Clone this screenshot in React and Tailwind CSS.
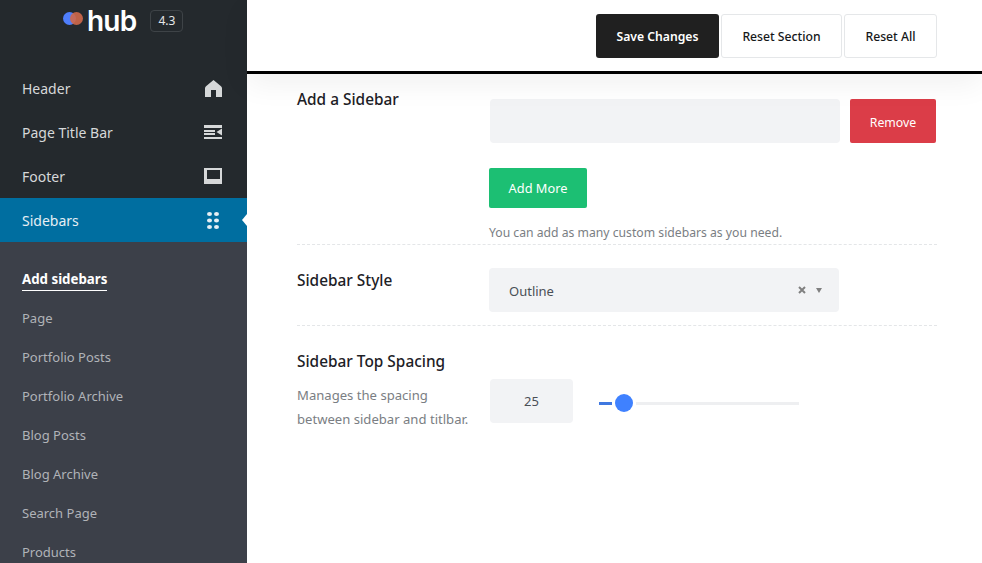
const font = { fontFamily: '"Noto Sans", sans-serif' };

const subItems = ["Page", "Portfolio Posts", "Portfolio Archive", "Blog Posts", "Blog Archive", "Search Page", "Products"];

function HomeIcon() {
  return (
    <svg width="17" height="17" viewBox="0 0 17 17" fill="currentColor">
      <path d="M8.5 0 16 6.2q1 .8 1 2V17h-6v-7H6v7H0V8.2q0-1.2 1-2z" />
    </svg>
  );
}

function TitleBarIcon() {
  return (
    <svg width="18" height="14" viewBox="0 0 18 14" fill="currentColor">
      <rect x="0" y="0" width="18" height="3" />
      <rect x="0" y="5" width="11" height="2" />
      <rect x="0" y="8" width="11" height="2" />
      <rect x="0" y="12" width="18" height="2" />
      <path d="M18 3.5v7L12.5 7z" />
    </svg>
  );
}

function FooterIcon() {
  return (
    <svg width="18" height="16" viewBox="0 0 18 16" fill="none">
      <path fillRule="evenodd" clipRule="evenodd" d="M0 0h18v16H0zM3 2v9h13V2z" fill="currentColor" />
    </svg>
  );
}

function DotsIcon() {
  return (
    <svg width="12" height="17" viewBox="0 0 12 17" fill="currentColor">
      <ellipse cx="2.5" cy="2" rx="2.5" ry="2" />
      <ellipse cx="9.5" cy="2" rx="2.5" ry="2" />
      <ellipse cx="2.5" cy="8.5" rx="2.5" ry="2" />
      <ellipse cx="9.5" cy="8.5" rx="2.5" ry="2" />
      <ellipse cx="2.5" cy="15" rx="2.5" ry="2" />
      <ellipse cx="9.5" cy="15" rx="2.5" ry="2" />
    </svg>
  );
}

function NavItem({ label, icon, active }) {
  return (
    <div className={`relative flex h-11 shrink-0 items-center justify-between pl-[22px] pr-[25px] text-[14px] ${active ? "bg-[#006ea0] text-[#e6eff4]" : "text-[#d6d8d9]"}`}>
      <span>{label}</span>
      <span className="flex w-[18px] justify-center">{icon}</span>
      {active ? <span className="absolute right-0 top-[16px] h-0 w-0 border-y-[6px] border-r-[5px] border-y-transparent border-r-white" /> : null}
    </div>
  );
}

function Sidebar() {
  return (
    <aside className="flex h-full w-[247px] shrink-0 flex-col bg-[#3c4049]">
      <div className="shrink-0 bg-[#24292d]">
        <div className="flex h-[66px] items-start pl-[63px]">
          <svg width="20" height="13" viewBox="0 0 20 13" className="mt-[12px]">
            <circle cx="6.5" cy="6.5" r="6.5" fill="#4f7efb" />
            <circle cx="13.5" cy="6.5" r="6.5" fill="#d0684a" fillOpacity="0.9" />
          </svg>
          <span className="ml-[4px] mt-[3px] text-[28px] font-semibold leading-9 tracking-[-0.8px] text-white" style={{ fontFamily: "Inter, sans-serif" }}>hub</span>
          <span className="ml-[14px] mt-[10px] flex h-[22px] w-[33px] items-center justify-center rounded-sm border border-[#3e4347] text-xs text-[#e5e7e8]">4.3</span>
        </div>
        <NavItem label="Header" icon={<HomeIcon />} />
        <NavItem label="Page Title Bar" icon={<TitleBarIcon />} />
        <NavItem label="Footer" icon={<FooterIcon />} />
      </div>
      <NavItem label="Sidebars" icon={<DotsIcon />} active />
      <div className="pl-[22px] pt-[22px] text-[13px] text-[#b0b3b8]">
        <div className="mb-[4px] flex h-[31px] items-center">
          <span className="border-b border-white pb-[1px] text-[13.3px] font-bold leading-[20px] text-white">Add sidebars</span>
        </div>
        {subItems.map((item) => (
          <div key={item} className="flex h-[39px] items-center">{item}</div>
        ))}
      </div>
    </aside>
  );
}

function TopBar() {
  return (
    <div className="relative z-10 flex h-[74px] shrink-0 items-start justify-end gap-[2px] border-b-[3px] border-black bg-white pr-[45px] pt-[14px] text-[12.2px] font-medium shadow-[0_10px_30px_rgba(0,0,0,0.06)]">
      <button className="h-11 w-[123px] rounded-[3px] bg-[#202020] pt-[2px] font-semibold text-white">Save Changes</button>
      <button className="h-11 w-[121px] rounded-[3px] border border-[#e5e7e9] bg-white pt-[2px] text-[#16181a]">Reset Section</button>
      <button className="h-11 w-[93px] rounded-[3px] border border-[#e5e7e9] bg-white pt-[2px] text-[#16181a]">Reset All</button>
    </div>
  );
}

function Slider() {
  return (
    <div className="ml-[26px] mt-[4px] flex w-[200px] items-center">
      <span className="h-[3px] w-[13px] bg-[#3f78e0]" />
      <span className="ml-[3px] h-[18px] w-[18px] rounded-full bg-[#3f81ff]" />
      <span className="ml-[3px] h-[3px] flex-1 bg-[#eeeff1]" />
    </div>
  );
}

function Content() {
  return (
    <div className="pl-[50px] pr-[45px] text-[13px] text-[#4a4f55]">
      <section className="flex h-[171px] border-b border-dashed border-[#e4e6e8] pt-[16px]">
        <h3 className="w-[192px] shrink-0 text-[15.4px] font-medium leading-[20px] text-[#1d2126]">Add a Sidebar</h3>
        <div className="pt-[9px]">
          <div className="flex gap-[10px] pl-px">
            <div className="h-11 w-[350px] rounded-[4px] bg-[#f2f3f5]" />
            <button className="h-11 w-[86px] rounded-[2px] bg-[#db3d48] pt-[4px] text-[12.3px] text-white">Remove</button>
          </div>
          <button className="mt-[25px] h-10 w-[98px] rounded-[2px] bg-[#1cbf73] pt-[2px] text-[12.8px] text-white">Add More</button>
          <p className="mt-[16px] text-[12.2px] leading-[18px] text-[#7a7e83]">You can add as many custom sidebars as you need.</p>
        </div>
      </section>
      <section className="flex h-[81px] items-start border-b border-dashed border-[#e4e6e8] pt-[23px]">
        <h3 className="w-[192px] shrink-0 pt-px text-[15.4px] font-medium leading-[24px] text-[#1d2126]">Sidebar Style</h3>
        <div className="flex h-11 w-[350px] items-center rounded-[4px] bg-[#f2f3f5] pl-5 pr-[17px]">
          <span className="flex-1 pt-[3px]">Outline</span>
          <svg width="8" height="8" viewBox="0 0 8 8" stroke="#808080" strokeWidth="2">
            <path d="M1 1l6 6M7 1L1 7" />
          </svg>
          <span className="ml-[10px] h-0 w-0 border-x-[3px] border-t-[5px] border-x-transparent border-t-[#808080]" />
        </div>
      </section>
      <section className="flex pt-[26px]">
        <div className="w-[193px] shrink-0">
          <h3 className="text-[15.4px] font-medium leading-5 text-[#1d2126]">Sidebar Top Spacing</h3>
          <p className="mt-[11px] text-[13.1px] leading-6 text-[#7a7e83]">Manages the spacing<br />between sidebar and titlbar.</p>
        </div>
        <div className="mt-[27px] flex h-11 items-center">
          <div className="flex h-11 w-[83px] items-center justify-center rounded-[4px] bg-[#f2f3f5] pt-px">25</div>
          <Slider />
        </div>
      </section>
    </div>
  );
}

export default function App() {
  return (
    <div className="flex h-[563px] w-[982px] overflow-hidden bg-white" style={font}>
      <Sidebar />
      <main className="flex min-w-0 flex-1 flex-col">
        <TopBar />
        <Content />
      </main>
    </div>
  );
}
